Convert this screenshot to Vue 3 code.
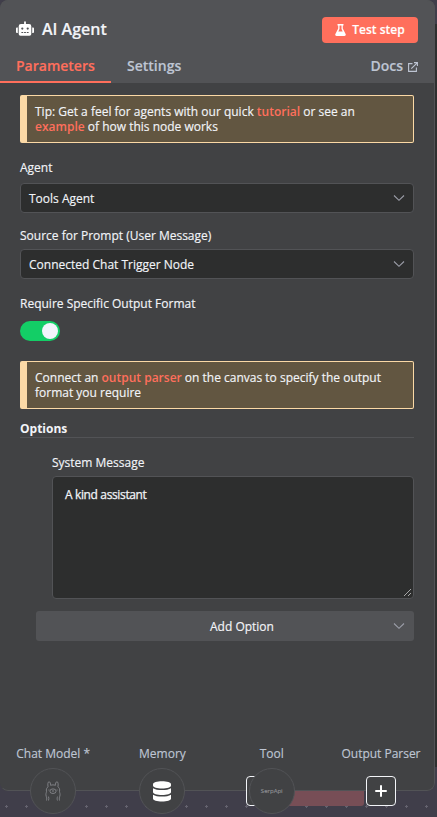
<script setup>
import { ref } from 'vue'

const systemMessage = ref('A kind assistant')
const selects = [
  { label: 'Agent', value: 'Tools Agent', cls: 'agent' },
  { label: 'Source for Prompt (User Message)', value: 'Connected Chat Trigger Node', cls: 'source' },
]
</script>

<template>
  <div class="canvas">
    <div class="canvas-edge"></div>
    <div class="canvas-node"></div>
    <main class="panel">
      <header class="head">
        <div class="title-row">
          <svg class="robot" width="18" height="15" viewBox="0 0 640 512">
            <path fill="#fff" fill-rule="evenodd" d="M32 224h32v192H32a32 32 0 0 1-32-32V256a32 32 0 0 1 32-32zm512-48v272a64 64 0 0 1-64 64H160a64 64 0 0 1-64-64V176a80 80 0 0 1 80-80h112V32a32 32 0 0 1 64 0v64h112a80 80 0 0 1 80 80zM264 256a40 40 0 1 0-80 0 40 40 0 0 0 80 0zm-8 128h-64v32h64zm96 0h-64v32h64zm104-128a40 40 0 1 0-80 0 40 40 0 0 0 80 0zm-8 128h-64v32h64zm192-128v128a32 32 0 0 1-32 32h-32V224h32a32 32 0 0 1 32 32z" />
          </svg>
          <h1>AI Agent</h1>
          <button class="test">
            <svg width="11" height="12" viewBox="0 0 11 12">
              <path fill="#fff" fill-rule="evenodd" d="M2.5 0h6v1.4h-.7v3.2l2.8 5.5c.5 1-.1 1.9-1.100 1.9h-8c-1 0-1.600-.9-1.100-1.900l2.800-5.500V1.400h-.7zM4.500 1.400v3.500L3.300 7.400h4.400L6.500 4.900V1.400z" />
            </svg>
            <span>Test step</span>
          </button>
        </div>
        <nav class="tabs">
          <a class="tab active"><span>Parameters</span></a>
          <a class="tab settings"><span>Settings</span></a>
          <a class="tab docs"><span>Docs</span>
            <svg width="10" height="10" viewBox="0 0 10 10" fill="none" stroke="#bec5d3" stroke-width="1.1">
              <path d="M4.500 1.600H.6v7.800h7.800V5.500M3.300 6.700 9.200.8M6 .6h3.400V4" />
            </svg>
          </a>
        </nav>
      </header>

      <section class="body">
        <div class="callout">
          <p>Tip: Get a feel for agents with our quick <a>tutorial</a> or see an</p>
          <p><a>example</a> of how this node works</p>
        </div>

        <div v-for="s in selects" :key="s.label" class="field" :class="s.cls">
          <label><span>{{ s.label }}</span></label>
          <div class="select">
            <span>{{ s.value }}</span>
            <svg width="12" height="8" viewBox="0 0 12 8" fill="none" stroke="#9b9da8" stroke-width="1.1"><path d="M1 1.500 6 6.300l5-4.800" /></svg>
          </div>
        </div>

        <div class="field require">
          <label><span>Require Specific Output Format</span></label>
          <div class="toggle"><i></i></div>
        </div>

        <div class="callout second">
          <p>Connect an <a>output parser</a> on the canvas to specify the output</p>
          <p>format you require</p>
        </div>

        <h2><span>Options</span></h2>
        <div class="system">
          <label><span>System Message</span></label>
          <div class="area">
            <span>{{ systemMessage }}</span>
            <svg width="9" height="9" viewBox="0 0 9 9" fill="none" stroke="#b5b5b5" stroke-width=".9"><path d="M1 8 8 1M5 8l3-3" /></svg>
          </div>
        </div>
        <div class="add">
          <span>Add Option</span>
          <svg width="12" height="8" viewBox="0 0 12 8" fill="none" stroke="#9b9da8" stroke-width="1.1"><path d="M1 1.500 6 6.300l5-4.800" /></svg>
        </div>
      </section>
    </main>

    <footer class="connections">
      <div class="conn">
        <span class="name chat">Chat Model *</span>
        <div class="circle">
          <svg width="16" height="20" viewBox="0 0 16 20" fill="none" stroke="#85868a" stroke-width=".9">
            <path d="M1.500 19.500c.4-2 .2-3-.3-4.300-.7-2 .1-3.300.3-4.500-.5-2.600.2-4 1.600-4.900C2.500 3.300 2.900.8 4 .7c1 0 1.600 1.700 1.700 3.700 1.300-.7 3.300-.7 4.600 0C10.400 2.400 11 .7 12 .7c1.100.1 1.500 2.600.9 5.100 1.400.9 2.100 2.300 1.600 4.900.2 1.200 1 2.500.3 4.500-.5 1.300-.7 2.300-.3 4.300" />
            <ellipse cx="8" cy="10.200" rx="3.100" ry="2.300" />
            <path d="M7.300 9.600 8 10l.7-.4M8 10v.9M3.900 8.500v1M12.100 8.500v1M3.500 19.500c.5-1.300.4-2.600 0-3.900M12.500 19.500c-.5-1.300-.4-2.600 0-3.900" />
          </svg>
        </div>
      </div>
      <div class="conn">
        <span class="name memory">Memory</span>
        <div class="circle">
          <svg width="18" height="21" viewBox="0 0 18 21" fill="#fff">
            <path d="M0 3.200C0 1.400 4 .2 9 .2s9 1.200 9 3v1.400c0 1.800-4 3-9 3s-9-1.200-9-3z" />
            <path d="M0 7.200c2 1.300 5.200 1.800 9 1.800s7-.5 9-1.800v3.900c0 1.800-4 3-9 3s-9-1.200-9-3z" />
            <path d="M0 13.700c2 1.300 5.200 1.800 9 1.800s7-.5 9-1.800v3.900c0 1.800-4 3-9 3s-9-1.200-9-3z" />
          </svg>
        </div>
      </div>
      <div class="conn">
        <span class="name tool">Tool</span>
        <div class="plus behind"></div>
        <div class="circle"><span class="serp">SerpApi</span></div>
      </div>
      <div class="conn">
        <span class="name parser">Output Parser</span>
        <div class="plus">
          <svg width="12" height="12" viewBox="0 0 12 12" stroke="#fff" stroke-width="2" stroke-linecap="round"><path d="M6 1v10M1 6h10" /></svg>
        </div>
      </div>
    </footer>
  </div>
</template>

<style>
body { margin: 0; background: #403e4a; }
</style>

<style scoped>
* { box-sizing: border-box; }
.canvas {
  position: relative;
  width: 437px;
  height: 817px;
  overflow: hidden;
  font-family: "Open Sans", sans-serif;
  font-size: 12px;
  color: #f2f4f8;
  -webkit-text-stroke: .15px currentColor;
  background-color: #403e4a;
  background-image: radial-gradient(circle at 6.500px 6.500px, #64626e 1px, transparent 1.300px);
  background-size: 20px 20px;
}
.canvas-edge { position: absolute; right: 0; top: 24px; width: 10px; height: 743px; background: #2e2f2f; }
.canvas-node { position: absolute; left: 270px; top: 770px; width: 94px; height: 36px; border-radius: 3px; background: #774e56; }
.panel {
  position: relative;
  width: 435px;
  height: 791px;
  background: #414244;
  border-radius: 8px;
  overflow: hidden;
}
.panel::after {
  content: "";
  position: absolute;
  inset: 0;
  border: 1px solid #525356;
  border-left-color: transparent;
  border-radius: 8px;
  pointer-events: none;
}
.head { height: 83px; background: #525356; display: flex; flex-direction: column; justify-content: space-between; }
.title-row { display: flex; align-items: center; height: 26px; margin: 17px 17px 0 16px; }
.robot { margin-top: -3px; }
h1 { margin: 0 auto 0 8px; font-size: 16px; line-height: 24px; font-weight: 600; white-space: nowrap; position: relative; top: -1px; }
.test {
  width: 96px; height: 26px; border: 0; border-radius: 4px; background: #ff6f5c; color: #fff;
  font: 600 12px/16px "Open Sans", sans-serif;
  display: flex; align-items: center; justify-content: center; gap: 6px; padding: 0; white-space: nowrap;
}
.tabs { display: flex; height: 34px; font-size: 14px; font-weight: 600; line-height: 20px; color: #bec5d3; }
.tab { display: flex; align-items: flex-start; padding-top: 7px; white-space: nowrap; }
.active { width: 111px; padding-left: 16px; border-bottom: 2px solid #ff6f5c; color: #ff6f5c; }
.settings { padding-left: 16px; }
.docs { margin-left: auto; margin-right: 17px; gap: 5px; }
.docs svg { margin-top: 6px; }
.body { padding: 12px 21px 0 20px; display: flex; flex-direction: column; }
.callout {
  height: 48px; background: #625641; border: 1px solid #fbd9a6; border-left-width: 7px;
  border-radius: 2px; padding: 8px 0 0 8px;
}
.callout p { margin: 0; height: 15px; line-height: 15px; white-space: nowrap; }
.callout a { color: #ff6f5c; font-weight: 600; -webkit-text-stroke: 0; }
label { display: block; line-height: 16px; white-space: nowrap; }
.field.agent { margin-top: 17px; }
.field.source { margin-top: 15px; }
.field.source .select { margin-top: 5px; }
.select {
  height: 30px; margin-top: 7px; padding: 0 8px; border: 1px solid #525356; border-radius: 4px;
  background: #2d2e2e; display: flex; align-items: center; justify-content: space-between;
}
.require { margin-top: 17px; }
.toggle { width: 40px; height: 20px; margin-top: 9px; border-radius: 10px; background: #13ce66; display: flex; justify-content: flex-end; padding: 2px; }
.toggle i { width: 16px; height: 16px; border-radius: 50%; background: #f2f4fb; }
.second { margin-top: 20px; }
h2 { margin: 11px 0 0; height: 18px; font-size: 12px; line-height: 18px; font-weight: 700; border-bottom: 1px solid #525356; -webkit-text-stroke: 0; }
.system { margin: 17px 0 0 32px; }
.area {
  display: flex; align-items: flex-start; justify-content: space-between; height: 123px; margin-top: 5px; padding: 9px 1px 1px 12px;
  border: 1px solid #525356; border-radius: 4px; background: #2d2e2e; line-height: 18px;
}
.area svg { align-self: flex-end; }
.area span { font-weight: 500; letter-spacing: -.36px; -webkit-text-stroke: .25px currentColor; }
.add {
  margin: 12px 0 0 16px; height: 30px; border-radius: 3px; background: #525356; padding: 0 9px 0 174px;
  display: flex; align-items: center; justify-content: space-between;
}
.connections { position: absolute; left: -1.500px; top: 744px; display: grid; grid-template-columns: repeat(4, 109.300px); }
.conn { position: relative; display: flex; flex-direction: column; align-items: center; height: 73px; }
.name { font-size: 12px; line-height: 20px; color: #bec5d3; white-space: nowrap; }
.parser { letter-spacing: -.02px; }
.circle {
  position: relative; width: 46px; height: 46px; margin-top: 4px; border: 1px solid #525356; border-radius: 50%;
  background: #414244; display: flex; align-items: center; justify-content: center;
}
.plus {
  width: 30px; height: 30px; margin-top: 12px; border: 1px solid #f2f4f8; border-radius: 4px;
  background: #414244; display: flex; align-items: center; justify-content: center;
}
.behind { position: absolute; left: 29px; top: 20px; }
.serp { font-size: 6px; line-height: 8px; color: #8e8f93; }
</style>
